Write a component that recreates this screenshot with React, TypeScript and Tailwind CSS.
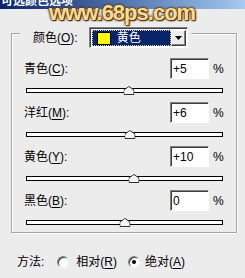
const rows = [
  { name: "青色", key: "C", value: "+5", pos: 5 },
  { name: "洋红", key: "M", value: "+6", pos: 6 },
  { name: "黄色", key: "Y", value: "+10", pos: 10 },
  { name: "黑色", key: "B", value: "0", pos: 0 },
];

const Label = ({ name, k }: { name: string; k: string }) => (
  <span>
    {name}(<span className="underline underline-offset-2">{k}</span>):
  </span>
);

const Thumb = () => (
  <svg width="11" height="9" viewBox="0 0 11 9">
    <path d="M0.5 8.5 V4 L5.5 0.5 L10.5 4 V8.5 Z" fill="#f4f4f4" stroke="#333" />
    <path d="M1.5 7.5 V4.5 L5.5 1.7" fill="none" stroke="#fff" />
  </svg>
);

const Slider = ({ pos }: { pos: number }) => (
  <div className="relative ml-[2px] w-[197px] h-[22px] flex items-center">
    <div className="w-full h-[5px] border border-black bg-white" />
    <div
      className="absolute top-[7px] -translate-x-1/2"
      style={{ left: `${50 + pos / 2}%` }}
    >
      <Thumb />
    </div>
  </div>
);

const Radio = ({ checked }: { checked?: boolean }) => (
  <span className="w-[12px] h-[12px] rounded-full bg-white border border-t-[#808080] border-l-[#808080] border-b-[#f4f4f4] border-r-[#f4f4f4] shadow-[inset_1px_1px_0_#404040] flex items-center justify-center">
    {checked && <span className="w-[4px] h-[4px] rounded-full bg-black" />}
  </span>
);

export default function App() {
  return (
    <div className="relative w-[245px] h-[278px] overflow-hidden bg-[#ececec] text-[12px] leading-[14px] text-black font-['Liberation_Sans','Noto_Sans_CJK_SC',sans-serif]">
      {/* title bar, cut at top */}
      <div className="h-[9px] overflow-hidden bg-gradient-to-r from-[#0a246a] to-[#a6caf0] pl-[1px]">
        <span className="block -mt-[5px] text-[12px] leading-[12px] font-bold text-white">可选颜色选项</span>
      </div>

      <div className="pl-[11px] pr-[8px] pt-[24px]">
        <div className="h-[200px] border border-[#a5a5a5] shadow-[1px_1px_0_#fff,inset_1px_1px_0_#fff]">
          {/* colour select sits on the top border */}
          <div className="-mt-[7px] ml-[8px] flex">
            <div className="flex items-center h-[21px] bg-[#ececec] pl-[13px] pr-[3px]">
              <Label name="颜色" k="O" />
              <div className="ml-[11px] w-[99px] h-[21px] flex p-[1px] bg-white border border-t-[#808080] border-l-[#808080] border-b-white border-r-white shadow-[inset_1px_1px_0_#404040]">
                <div className="flex-1 flex items-center bg-[#0a246a] border border-dotted border-[#d8d0a0] ml-[1px] mt-[1px]">
                  <span className="ml-[4px] w-[14px] h-[13px] bg-[#ffff00] border border-black" />
                  <span className="ml-[6px] text-white">黄色</span>
                </div>
                <div className="w-[15px] mt-[1px] flex items-center justify-center bg-[#ececec] border border-t-white border-l-white border-b-[#404040] border-r-[#404040] shadow-[inset_-1px_-1px_0_#808080]">
                  <svg width="7" height="4" viewBox="0 0 7 4">
                    <path d="M0 0 H7 L3.5 4 Z" fill="#000" />
                  </svg>
                </div>
              </div>
            </div>
          </div>

          <div className="mt-[10px] pl-[12px] flex flex-col gap-[1px]">
            {rows.map((r) => (
              <div key={r.key}>
                <div className="flex items-center h-[21px]">
                  <div className="w-[146px]">
                    <Label name={r.name} k={r.key} />
                  </div>
                  <div className="w-[39px] h-[21px] flex items-center pl-[2px] bg-white border border-t-[#808080] border-l-[#808080] border-b-white border-r-white shadow-[inset_1px_1px_0_#404040]">
                    {r.value}
                  </div>
                  <span className="ml-[4px]">%</span>
                </div>
                <Slider pos={r.pos} />
              </div>
            ))}
          </div>
        </div>

        <div className="mt-[21px] ml-[6px] h-[16px] flex items-center">
          <span>方法:</span>
          <span className="ml-[13px]"><Radio /></span>
          <span className="ml-[7px]">
            相对(<span className="underline underline-offset-2">R</span>)
          </span>
          <span className="ml-[11px]"><Radio checked /></span>
          <span className="ml-[5px]">
            绝对(<span className="underline underline-offset-2">A</span>)
          </span>
        </div>
      </div>

      {/* watermark over the top */}
      <div className="absolute left-[49px] top-[1px] text-[22px] leading-[23px] font-bold tracking-[-1px] text-[#f9dd96] font-['Liberation_Sans',sans-serif] [text-shadow:0_0_2px_#5a3205,0_0_2px_#5a3205,0_0_3px_#6b3c08,1px_1px_1px_#3a1f00]">
        www.68ps.com
      </div>
    </div>
  );
}
